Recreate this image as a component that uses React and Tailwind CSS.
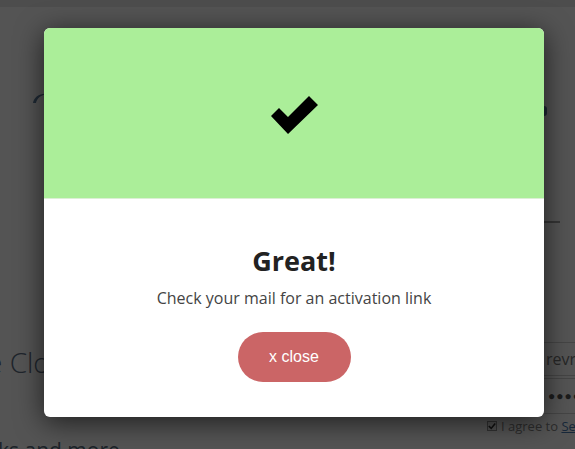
// background page, seen through the overlay
function PageBehind() {
  return (
    <div className="font-['Open_Sans',sans-serif] text-[#607086]">
      <div className="h-[7px] bg-[#e8e8e8]" />

      {/* logo row */}
      <div className="mt-[85px] flex h-[24px] items-start justify-between">
        <svg className="ml-[32px] h-[12px] w-[16px]" viewBox="0 0 16 12">
          <path d="M1 11 C2 5 8 1 15 2 C9 3 5 6 4 11 Z" fill="#5f7fa0" />
        </svg>
        <div className="mr-[28px] mt-[14px] h-[10px] w-[6px] rounded-full bg-[#5f7fa0]" />
      </div>

      <div className="mt-[105px] flex justify-end">
        <div className="mr-[15px] h-[2px] w-[16px] bg-[#a0a0a0]" />
      </div>

      {/* heading + sign up form */}
      <div className="mt-[119px] flex">
        <div className="flex-1 overflow-hidden whitespace-nowrap">
          <h1 className="-ml-[13px] mt-[1px] text-[28px] font-light leading-[38px] text-[#607086]">
            e Cloud
          </h1>
        </div>
        <div className="w-[88px] shrink-0">
          <div className="ml-[55px] h-[34px] w-[140px] border border-[#d0d0d0] pl-[3px] text-[16px] leading-[32px] text-[#777]">
            revr0ck
          </div>
          <div className="ml-[55px] mt-[2px] h-[36px] w-[140px] border border-[#d0d0d0] pl-[5px] text-[12px] leading-[34px] tracking-[1px] text-[#555]">
            ●●●●●●
          </div>
          <div className="mt-[6px] flex items-center gap-[4px] whitespace-nowrap text-[13px] leading-[12px] text-[#888]">
            <span className="flex h-[10px] w-[10px] items-center justify-center border border-[#999] bg-[#eee]">
              <svg viewBox="0 0 10 10" className="h-[8px] w-[8px]">
                <path d="M1 5 L4 8 L9 2" stroke="#333" strokeWidth="2" fill="none" />
              </svg>
            </span>
            <span>
              I agree to <span className="text-[#4a7ab0] underline">Service</span>
            </span>
          </div>
        </div>
      </div>

      <div className="-ml-[2px] mt-[3px] whitespace-nowrap text-[21px] leading-[30px] text-[#5a6a7c]">
        ks and more
      </div>
    </div>
  );
}

export default function App() {
  return (
    <div className="relative h-[449px] w-full overflow-hidden bg-white">
      <PageBehind />

      {/* overlay */}
      <div className="absolute inset-0 bg-black/[0.67]" />

      {/* modal */}
      <div className="absolute left-[44px] top-[28px] w-[500px] overflow-hidden rounded-[6px] bg-white font-['Open_Sans',sans-serif] shadow-[0_5px_28px_rgba(0,0,0,0.65)]">
        <div className="flex h-[171px] items-center justify-center border-b border-[#dcefd5] bg-[#abee99]">
          <svg className="mt-[4px] h-[40px] w-[48px]" viewBox="0 0 48 40">
            <polygon points="1,21 9,13 18,22 39,1 48,10 18,39" fill="#000" />
          </svg>
        </div>
        <div className="flex flex-col items-center pb-[35px] pt-[43px]">
          <h2 className="text-[27px] font-bold leading-[37px] text-[#222]">Great!</h2>
          <p className="mt-[8px] text-[16px] leading-[22px] text-[#444]">
            Check your mail for an activation link
          </p>
          <button className="mt-[23px] h-[50px] w-[113px] rounded-full bg-[#cb6566] font-['Liberation_Sans',Arial,sans-serif] text-[16px] text-white">
            x close
          </button>
        </div>
      </div>
    </div>
  );
}
